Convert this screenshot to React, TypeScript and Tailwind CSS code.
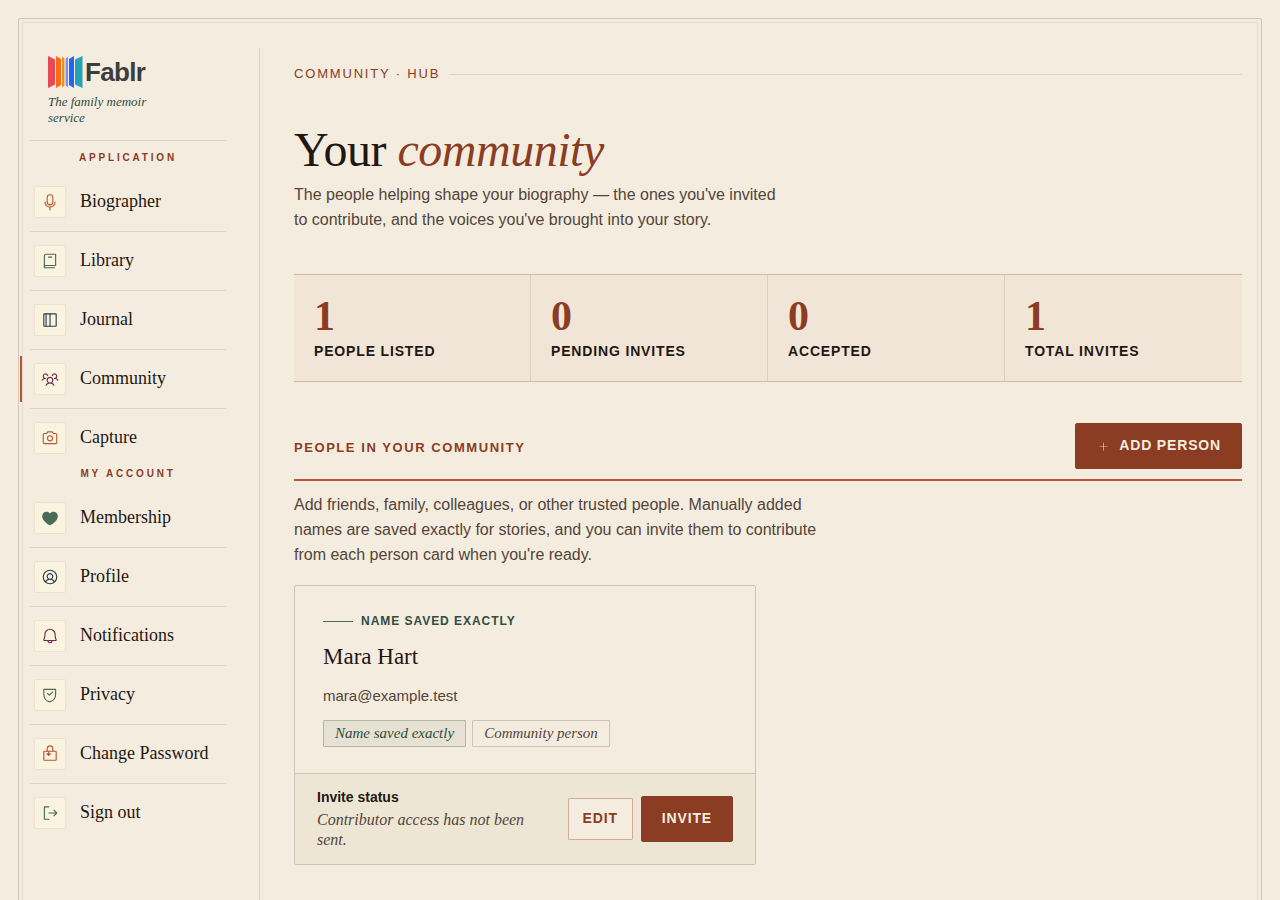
import React from 'react';
import { clsx } from 'clsx';
import type { IconType } from 'react-icons';
import {
    PiBell,
    PiBook,
    PiCamera,
    PiHeartFill,
    PiMicrophone,
    PiPlus,
    PiSignOut,
    PiUserCircle,
    PiUsersThree,
} from 'react-icons/pi';

type NavIcon = IconType | React.FC<{ className?: string }>;

interface NavEntry {
    label: string;
    icon: NavIcon;
    tone: string;
    active?: boolean;
}

interface Stat {
    value: number;
    label: string;
}

const strokeProps = {
    viewBox: '0 0 256 256',
    fill: 'none',
    stroke: 'currentColor',
    strokeWidth: 16,
    strokeLinecap: 'round' as const,
    strokeLinejoin: 'round' as const,
    'aria-hidden': true,
};

const LibraryIcon: React.FC<{ className?: string }> = ({ className }) => (
    <svg viewBox="0 0 256 256" className={className} aria-hidden="true">
        <PiBook size={256} />
        <path d="M108 72h44" stroke="currentColor" strokeWidth="18" strokeLinecap="round" />
    </svg>
);

const JournalIcon: React.FC<{ className?: string }> = ({ className }) => (
    <svg {...strokeProps} className={className}>
        <rect x="40" y="40" width="176" height="176" rx="8" />
        <path d="M72 40v176M128 40v176" />
    </svg>
);

const PrivacyIcon: React.FC<{ className?: string }> = ({ className }) => (
    <svg {...strokeProps} className={className}>
        <path d="M40 48h168v64c0 64-36 100-84 114c-48-14-84-50-84-114Z" />
        <path d="M92 104l26 26l46-42" />
    </svg>
);

const PasswordIcon: React.FC<{ className?: string }> = ({ className }) => (
    <svg {...strokeProps} className={className}>
        <rect x="40" y="88" width="176" height="128" rx="8" />
        <path d="M88 88V52a40 40 0 0 1 80 0v36" />
        <path d="M108 92v56M84 126l24 20l28-20z" />
    </svg>
);

const applicationNav: NavEntry[] = [
    { label: 'Biographer', icon: PiMicrophone, tone: 'text-[#b85735]' },
    { label: 'Library', icon: LibraryIcon, tone: 'text-[#4a6b55]' },
    { label: 'Journal', icon: JournalIcon, tone: 'text-[#2c3e4c]' },
    { label: 'Community', icon: PiUsersThree, tone: 'text-[#6b2d4a]', active: true },
    { label: 'Capture', icon: PiCamera, tone: 'text-[#b85735]' },
];

const accountNav: NavEntry[] = [
    { label: 'Membership', icon: PiHeartFill, tone: 'text-[#4a6b55]' },
    { label: 'Profile', icon: PiUserCircle, tone: 'text-[#2c3e4c]' },
    { label: 'Notifications', icon: PiBell, tone: 'text-[#6b2d4a]' },
    { label: 'Privacy', icon: PrivacyIcon, tone: 'text-[#4a6b55]' },
    { label: 'Change Password', icon: PasswordIcon, tone: 'text-[#b85735]' },
    { label: 'Sign out', icon: PiSignOut, tone: 'text-[#4a6b55]' },
];

const stats: Stat[] = [
    { value: 1, label: 'People listed' },
    { value: 0, label: 'Pending invites' },
    { value: 0, label: 'Accepted' },
    { value: 1, label: 'Total invites' },
];

const Logo: React.FC = () => (
    <a href="#" className="flex items-center gap-[2px]">
        <svg width="35" height="32" viewBox="0 0 35 32" aria-hidden="true">
            <path d="M0 0L7 3.5V28.5L0 32Z" fill="#e84855" />
            <path d="M8 0L13 3V29L8 32Z" fill="#ff6a13" />
            <path d="M14 .5L16.5 2.5V29.5L14 31.5Z" fill="#d9962b" />
            <path d="M16.5 3L17.5 3.5V28.5L16.5 29Z" fill="#ecd3a4" />
            <path d="M17.7 2.5L20 .5V31.5L17.7 29.5Z" fill="#7b8cff" />
            <path d="M21 3L26 0V32L21 29Z" fill="#1f66ff" />
            <path d="M27 3.5L34.5 0V32L27 28.5Z" fill="#23a2b8" />
        </svg>
        <span className="text-[26px] leading-8 font-bold tracking-tight text-[#3d3d3d]">Fablr</span>
    </a>
);

const NavSection: React.FC<{ title: string; items: NavEntry[] }> = ({ title, items }) => (
    <>
        <h2 className="mb-[10px] text-center text-[10px] leading-[10px] font-bold uppercase tracking-[0.28em] text-[#8a3d22]">
            {title}
        </h2>
        <ul className="mb-px">
            {items.map(({ label, icon: Icon, tone, active }) => (
                <li key={label} className="relative border-b border-[#ded5c7] last:border-transparent">
                    {active && <span className="absolute top-[6px] bottom-[6px] -left-[10px] w-[2px] bg-[#b85735]" />}
                    <a
                        href="#"
                        aria-current={active ? 'page' : undefined}
                        className="flex h-[58px] items-center gap-[14px] pl-1 font-['Liberation_Serif',serif] text-[18px] leading-6 text-[#1f1812]"
                    >
                        <span className={clsx('flex size-8 shrink-0 items-center justify-center rounded-[2px] border border-[#ebe2cf] bg-[#faf3e0]', tone)}>
                            <Icon className="size-[18px]" />
                        </span>
                        <span className="whitespace-nowrap pb-[2px]">{label}</span>
                    </a>
                </li>
            ))}
        </ul>
    </>
);

const Sidebar: React.FC = () => (
    <aside className="w-[237px] shrink-0 border-r border-[#ded5c7] pt-2 pr-[33px] pl-[7px]">
        <div className="border-b border-[#ded5c7] pb-[14px] pl-[18px]">
            <Logo />
            <p className="mt-[6px] max-w-[120px] font-['Liberation_Serif',serif] text-[13px] leading-4 italic text-[#2f4d3f]">
                The family memoir service
            </p>
        </div>
        <nav className="pt-3">
            <NavSection title="Application" items={applicationNav} />
            <NavSection title="My account" items={accountNav} />
        </nav>
    </aside>
);

const StatStrip: React.FC = () => (
    <dl className="mt-[42px] grid grid-cols-4 border-y border-[#cdbfb0] bg-[#f1e5d7]">
        {stats.map(({ value, label }) => (
            <div key={label} className="flex flex-col-reverse border-r border-[#dccfc0] p-5 last:border-r-0">
                <dt className="text-sm font-bold uppercase tracking-[0.06em] text-[#1f1812]">{label}</dt>
                <dd className="mb-1 font-['Liberation_Serif',serif] text-[42px] leading-[42px] font-bold text-[#8a3d22]">{value}</dd>
            </div>
        ))}
    </dl>
);

const PersonCard: React.FC = () => (
    <article className="overflow-hidden rounded-[2px] border border-[#cdc4b6]">
        <div className="px-7 pt-[27px] pb-[26px]">
            <p className="flex items-center gap-2 text-xs font-bold uppercase tracking-[0.08em] text-[#2f4d3f]">
                <span className="h-px w-[30px] bg-[#4a6b55]" />
                Name saved exactly
            </p>
            <h3 className="mt-[14px] font-['Liberation_Serif',serif] text-[23px] leading-7 text-[#1f1812]">Mara Hart</h3>
            <p className="mt-[14px] text-[15px] leading-[22px] text-[#52453a]">mara@example.test</p>
            <div className="mt-[13px] flex flex-wrap gap-[6px] font-['Liberation_Serif',serif] text-[15px] leading-[21px] italic">
                <span className="rounded-[1px] border border-[#adb8a7] bg-[#e6e1d3] px-[11px] py-[2px] text-[#2f4d3f]">
                    Name saved exactly
                </span>
                <span className="rounded-[1px] border border-[#cdc4b6] px-[11px] py-[2px] text-[#52453a]">
                    Community person
                </span>
            </div>
        </div>
        <div className="flex items-center gap-4 border-t border-[#cdc4b0] bg-[#eee6d5] px-[22px] py-[13px]">
            <div className="min-w-0 flex-1 pb-px">
                <p className="text-sm font-bold text-[#1f1812]">Invite status</p>
                <p className="mt-[3px] font-['Liberation_Serif',serif] text-base leading-5 italic text-[#52453a]">
                    Contributor access has not been sent.
                </p>
            </div>
            <div className="flex items-center gap-2 text-sm font-bold uppercase">
                <button
                    type="button"
                    className="h-[42px] rounded-[1px] border border-[#d3ab9a] bg-[#f4ecdf] px-[14px] pb-[2px] font-bold uppercase tracking-[0.06em] text-[#8a3d22]"
                >
                    Edit
                </button>
                <button
                    type="button"
                    className="h-[46px] rounded-[2px] border border-[#8a3d22] bg-[#8a3d22] px-5 pb-[2px] font-bold uppercase tracking-[0.06em] text-[#f4ecdf]"
                >
                    Invite
                </button>
            </div>
        </div>
    </article>
);

const CommunityHub: React.FC = () => (
    <main className="min-w-0 flex-1 pt-[18px] pr-[15px] pb-16 pl-[34px]">
        <div className="flex items-center gap-[9px] text-[13px] leading-4 uppercase tracking-[0.14em] text-[#8a3d22]">
            Community · Hub
            <span className="h-px flex-1 bg-[#ded5c7]" />
        </div>

        <h1 className="mt-[44px] font-['Liberation_Serif',serif] text-5xl leading-[48px] tracking-[-0.01em] text-[#1f1812]">
            Your <em className="text-[#8a3d22]">community</em>
        </h1>
        <p className="mt-2 max-w-[496px] text-base leading-[25px] text-[#52453a]">
            The people helping shape your biography — the ones you've invited to contribute, and the voices you've brought into your story.
        </p>

        <StatStrip />

        <section className="mt-[41px]">
            <div className="flex items-center justify-between border-b-2 border-[#b85735] pb-[10px]">
                <h2 className="pt-1 text-[13px] leading-4 font-bold uppercase tracking-[0.12em] text-[#8a3d22]">
                    People in your community
                </h2>
                <button
                    type="button"
                    className="flex h-[46px] items-center gap-[10px] rounded-[2px] border border-[#8a3d22] bg-[#8a3d22] px-5 text-sm font-bold uppercase tracking-[0.06em] text-[#f4ecdf]"
                >
                    <PiPlus className="ml-[2px] size-[11px] opacity-80" aria-hidden="true" />
                    <span className="pb-[2px]">Add person</span>
                </button>
            </div>
            <p className="mt-[11px] max-w-[540px] text-base leading-[25px] text-[#52453a]">
                Add friends, family, colleagues, or other trusted people. Manually added names are saved exactly for stories, and you can invite them to contribute from each person card when you're ready.
            </p>
            <div className="mt-[18px] grid grid-cols-2 gap-6">
                <PersonCard />
            </div>
        </section>
    </main>
);

export default function App() {
    return (
        <div className="flex min-h-screen bg-[#f4ecdf] p-[18px] font-['Liberation_Sans',Arial,sans-serif]">
            <div className="flex flex-1 rounded-[2px] border border-[#d0c7ba] p-[3px]">
                <div className="flex min-w-0 flex-1 rounded-[2px] border border-[#e4dbcd] pt-[25px]">
                    <Sidebar />
                    <CommunityHub />
                </div>
            </div>
        </div>
    );
}
